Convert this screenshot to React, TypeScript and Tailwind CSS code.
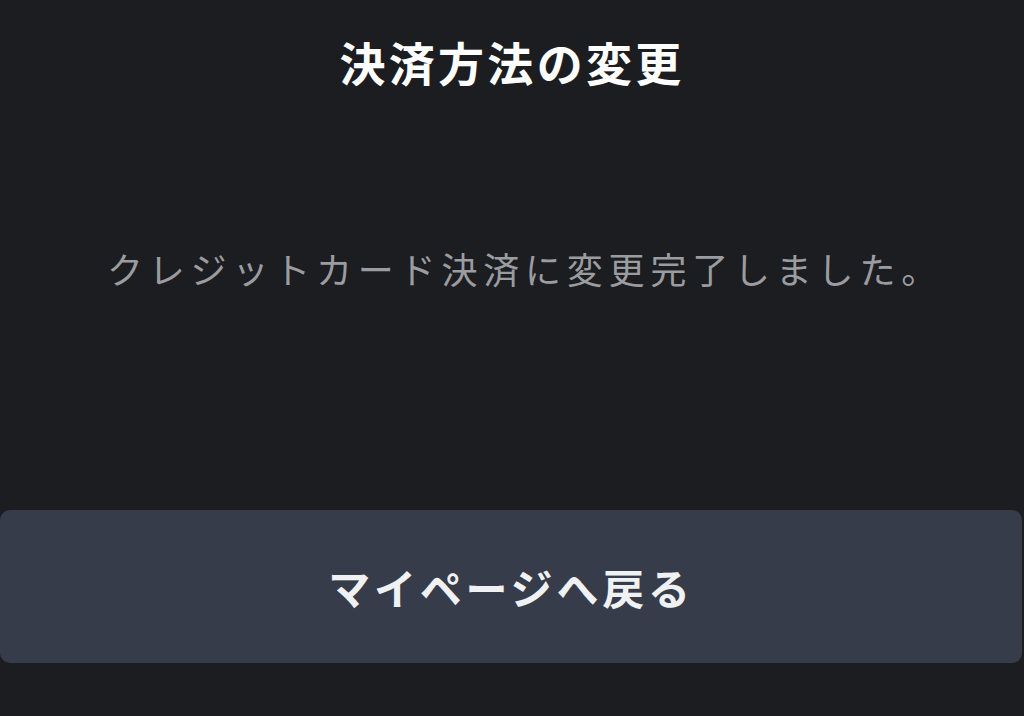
export default function App() {
  return (
    <div
      className="flex h-[716px] w-[1024px] flex-col bg-[#1c1d21]"
      style={{ fontFamily: '"Noto Sans CJK JP", "Noto Sans", sans-serif' }}
    >
      <h1 className="mt-[31px] text-center text-[46px] font-bold leading-[60px] tracking-[3.3px] text-white">
        決済方法の変更
      </h1>
      <p className="mt-[153px] pl-[26px] text-center text-[36px] leading-[48px] tracking-[5.8px] text-[#9b9c9f]">
        クレジットカード決済に変更完了しました。
      </p>
      <button className="mt-[218px] mr-[2px] flex h-[153px] items-center justify-center rounded-[10px] bg-[#363c49] text-[42px] font-bold tracking-[3.8px] text-[#f0f1f3]">
        マイページへ戻る
      </button>
    </div>
  );
}
